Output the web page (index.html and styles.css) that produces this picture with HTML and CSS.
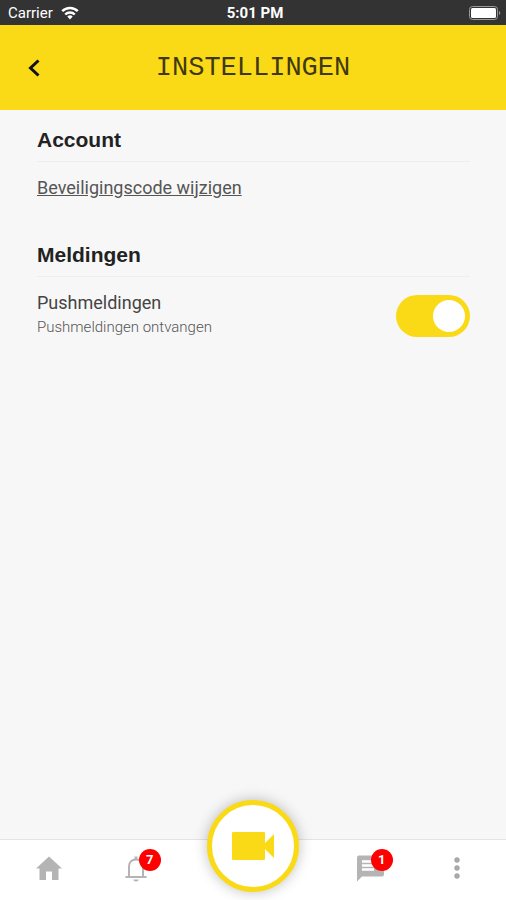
FILE: index.html
```html
<!DOCTYPE html>
<html lang="nl">
<head>
    <meta charset="utf-8">
    <meta name="viewport" content="width=device-width, initial-scale=1">
    <title>Instellingen</title>
    <link rel="stylesheet" href="styles.css">
</head>
<body>
    <div class="statusbar">
        <div class="carrier">
            <span>Carrier</span>
            <svg width="18" height="14" viewBox="0 0 18 14" fill="none" stroke="#fff" stroke-width="2.4">
                <path d="M1.2 5.2a11 11 0 0 1 15.6 0"/>
                <path d="M4.2 8.5a6.8 6.8 0 0 1 9.6 0"/>
                <path d="M9 13.5L6.3 10.6a3.9 3.9 0 0 1 5.4 0z" fill="#fff" stroke="none"/>
            </svg>
        </div>
        <span class="time">5:01 PM</span>
        <svg class="battery" width="33" height="14" viewBox="0 0 33 14">
            <rect x="0.5" y="0.5" width="28" height="13" rx="3" fill="none" stroke="#999"/>
            <rect x="2" y="2" width="25" height="10" rx="1.5" fill="#fff"/>
            <path d="M30 5a2.2 2.2 0 0 1 0 4z" fill="#999"/>
        </svg>
    </div>

    <header class="header">
        <button type="button" class="back" aria-label="Terug">
            <svg width="12" height="18" viewBox="0 0 12 18" fill="none" stroke="#111" stroke-width="3">
                <path d="M10.5 1.5L2.5 9l8 7.5"/>
            </svg>
        </button>
        <h1>INSTELLINGEN</h1>
    </header>

    <main class="content">
        <section>
            <h2>Account</h2>
            <a href="#" class="link">Beveiligingscode wijzigen</a>
        </section>
        <section>
            <h2>Meldingen</h2>
            <div class="setting">
                <label for="push">
                    <span class="name">Pushmeldingen</span>
                    <span class="hint">Pushmeldingen ontvangen</span>
                </label>
                <input type="checkbox" id="push" class="toggle" checked>
            </div>
        </section>
    </main>

    <nav class="tabs">
        <a href="#" aria-label="Home">
            <svg width="26" height="24" viewBox="0 0 26 24" fill="#b4b4b4">
                <path d="M13 0.5L0 12.5h3.5V24H10v-8.5h6V24h6.5V12.5H26z"/>
            </svg>
        </a>
        <a href="#" aria-label="Meldingen">
            <svg width="22" height="27" viewBox="0 0 22 27" fill="none" stroke="#b4b4b4" stroke-width="2">
                <path d="M0.5 22h21M4 22V11.5C4 7 7 4.500 11 4.500S18 7 18 11.500V22"/>
                <path d="M11 1.500V5" stroke-width="3"/>
                <path d="M8.300 24.500h5.400a2.700 2 0 0 1-5.400 0z" fill="#b4b4b4" stroke="none"/>
            </svg>
            <span class="badge">7</span>
        </a>
        <button type="button" class="camera" aria-label="Camera">
            <svg width="42" height="28" viewBox="0 0 42 28" fill="#fada17">
                <path d="M1 0h31a1 1 0 0 1 1 1v10L42 2v24l-9-9v10a1 1 0 0 1-1 1H1a1 1 0 0 1-1-1V1a1 1 0 0 1 1-1z"/>
            </svg>
        </button>
        <a href="#" aria-label="Berichten">
            <svg width="27" height="27" viewBox="0 0 27 27">
                <path d="M2 0.500h23a2 2 0 0 1 2 2v17a2 2 0 0 1-2 2H5L0 26.500V2.500a2 2 0 0 1 2-2z" fill="#b4b4b4"/>
                <path d="M5 6.500h17M5 10.500h17M5 14.500h12" stroke="#fff" stroke-width="2.600"/>
            </svg>
            <span class="badge">1</span>
        </a>
        <a href="#" aria-label="Meer">
            <svg width="6" height="22" viewBox="0 0 6 22" fill="#a8a8a8">
                <circle cx="3" cy="3" r="2.700"/>
                <circle cx="3" cy="11" r="2.700"/>
                <circle cx="3" cy="19" r="2.700"/>
            </svg>
        </a>
    </nav>
</body>
</html>
```
FILE: styles.css
```css
* {
    box-sizing: border-box;
}

body {
    margin: 0;
    min-height: 100vh;
    display: flex;
    flex-direction: column;
    background: #f7f7f7;
    color: #444;
    font-family: Roboto, sans-serif;
}

.statusbar {
    display: grid;
    grid-template-columns: 1fr auto 1fr;
    align-items: center;
    height: 25px;
    padding: 0 4px 0 8px;
    background: #333;
    color: #fff;
    font-size: 15px;
}

.carrier {
    display: flex;
    align-items: center;
    gap: 8px;
}

.time {
    font-weight: 700;
}

.battery {
    justify-self: end;
}

.header {
    display: grid;
    grid-template-columns: 48px 1fr 48px;
    align-items: center;
    height: 85px;
    padding: 0 10px;
    background: #fada17;
}

.back {
    display: flex;
    align-items: center;
    justify-content: center;
    height: 48px;
    padding: 0;
    border: none;
    background: none;
    cursor: pointer;
}

h1 {
    margin: 0;
    font-family: "Liberation Mono", monospace;
    font-size: 27px;
    font-weight: 400;
    text-align: center;
    color: #40390f;
}

.content {
    flex: 1;
    padding: 16px 36px 0 37px;
}

section {
    margin-bottom: 39px;
}

h2 {
    margin: 0 0 12px;
    padding-bottom: 7px;
    border-bottom: 1px solid #eee;
    color: #222;
    font-family: "Liberation Sans", Arial, sans-serif;
    font-size: 21px;
    line-height: 28px;
}

.link {
    display: block;
    color: #555;
    font-size: 18px;
    line-height: 28px;
}

.setting {
    display: flex;
    align-items: flex-end;
    justify-content: space-between;
}

.name,
.hint {
    display: block;
}

.name {
    font-size: 18px;
    line-height: 28px;
}

.hint {
    color: #555;
    font-size: 15px;
    font-weight: 300;
    line-height: 20px;
}

.toggle {
    appearance: none;
    display: flex;
    align-items: center;
    justify-content: flex-end;
    width: 74px;
    height: 42px;
    margin: 0;
    padding: 5px;
    border-radius: 21px;
    background: #fada17;
    cursor: pointer;
}

.toggle::before {
    content: "";
    width: 32px;
    height: 32px;
    border-radius: 50%;
    background: #fff;
}

.toggle:not(:checked) {
    justify-content: flex-start;
    background: #ccc;
}

.tabs {
    display: grid;
    grid-template-columns: 7fr 7fr 12fr 7fr 7fr;
    align-items: center;
    justify-items: center;
    height: 61px;
    padding: 0 6px;
    border-top: 1px solid #e4e4e4;
    background: #fff;
}

.tabs a {
    position: relative;
    display: flex;
    margin-top: -4px;
}

.badge {
    position: absolute;
    top: -6px;
    left: 14px;
    width: 22px;
    height: 22px;
    border-radius: 50%;
    background: #f00;
    color: #fff;
    font-size: 13px;
    font-weight: 700;
    line-height: 22px;
    text-align: center;
}

.camera {
    display: flex;
    align-items: center;
    justify-content: center;
    width: 92px;
    height: 92px;
    margin: -48px 0 0;
    padding: 0;
    border: 5px solid #fada17;
    border-radius: 50%;
    background: #fff;
    box-shadow: 0 0 14px rgba(0, 0, 0, 0.25);
    cursor: pointer;
}
```
